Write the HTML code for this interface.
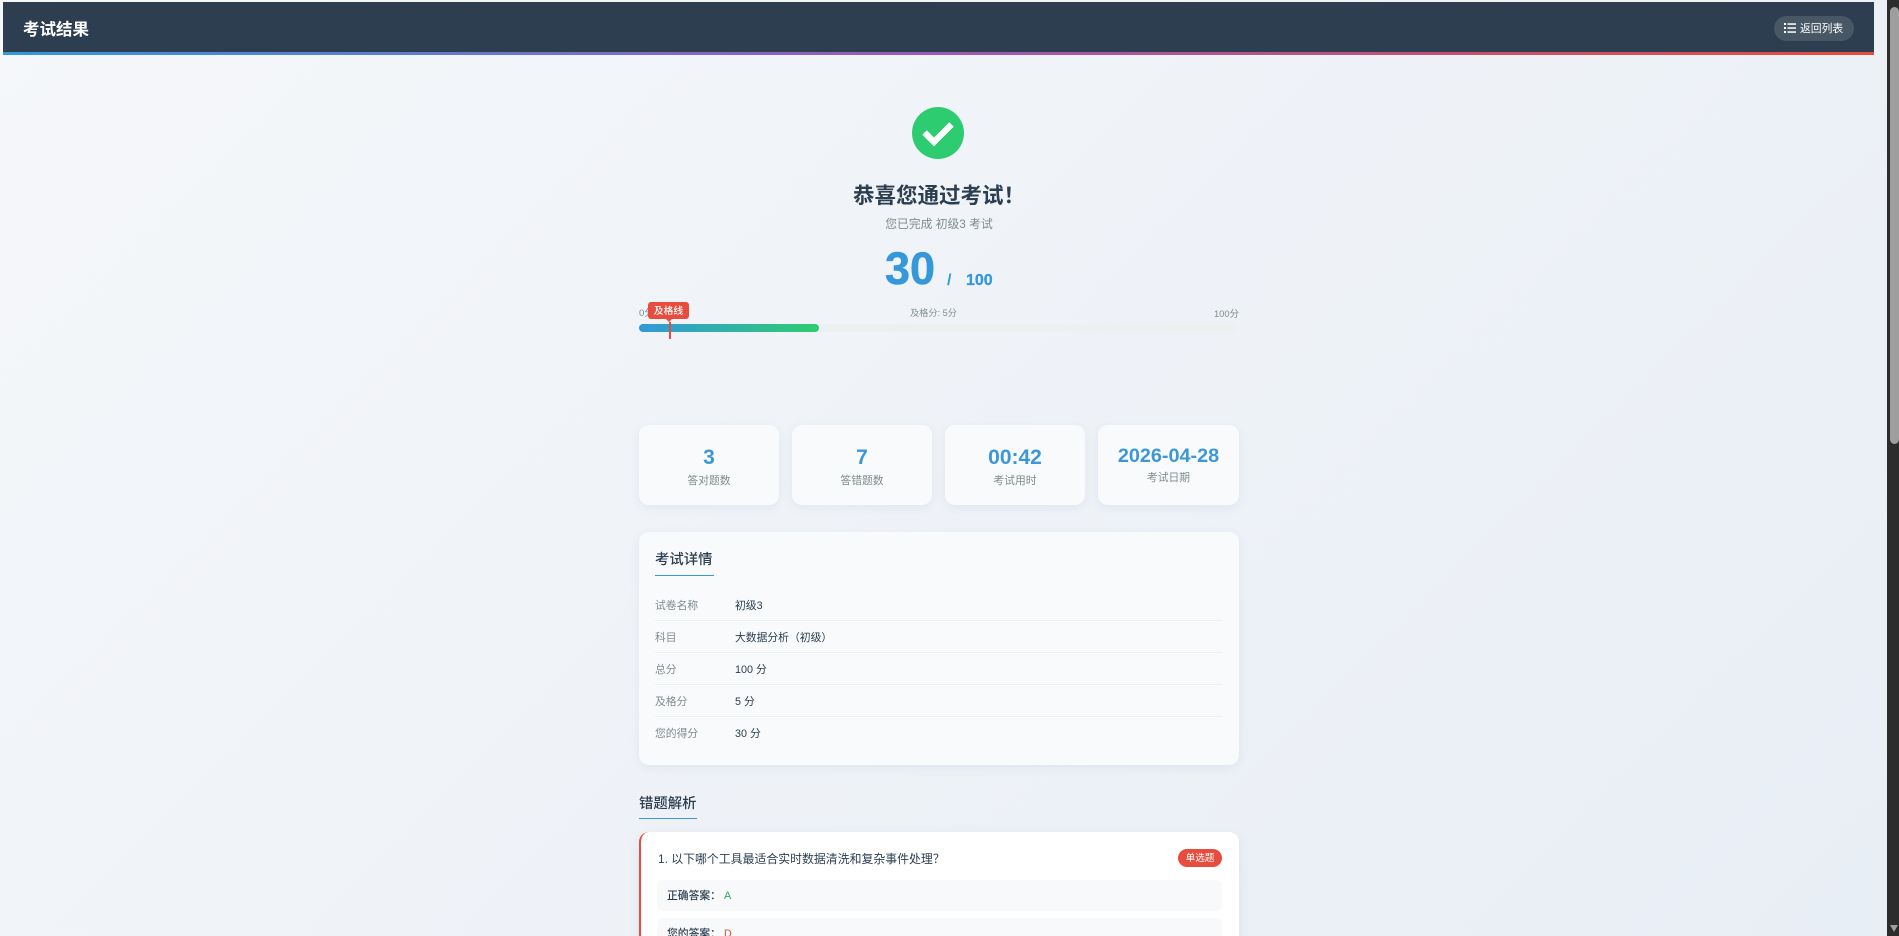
<!DOCTYPE html>
<html lang="zh-CN"><head><meta charset="utf-8"><title>考试结果</title>
<style>
*{box-sizing:border-box;margin:0;padding:0}
html,body{width:1899px;height:936px;overflow:hidden}
body{position:relative;font-family:"Liberation Sans","Noto Sans CJK SC",sans-serif;background:linear-gradient(135deg,#f5f7fa 0%,#e8eef5 100%);color:#2c3e50}
.a{position:absolute;white-space:nowrap}
.hdr{left:3px;top:2px;width:1871px;height:53px;background:#2c3e50}
.bar{left:3px;top:52px;width:1871px;height:3px;background:linear-gradient(90deg,#3498db,#9b59b6,#e74c3c)}
.ttl{left:23px;top:19px;font-size:16.500px;line-height:22px;font-weight:700;color:#fff}
.btn{left:1774px;top:16px;width:80px;height:25px;border-radius:13px;background:rgba(255,255,255,.13)}
.btnt{left:1800px;top:21px;font-size:10.800px;line-height:17px;color:#fff}
.c{text-align:center}
.card{background:#f8fafc;border-radius:10px;box-shadow:0 3px 10px rgba(60,80,110,.07)}
.sv{font-weight:700;color:#3d97d6;font-size:21px;line-height:26px;text-align:center}
.sl{font-size:10.800px;line-height:15px;color:#7f8c8d;text-align:center}
.lb{left:655px;font-size:10.800px;line-height:16px;color:#7f8c8d}
.v{left:735px;font-size:10.800px;line-height:16px;color:#2c3e50}
.ln{left:655px;width:567px;height:1px;background:#ecf0f1}
</style></head><body>
<div class="a hdr"></div><div class="a bar"></div>
<div class="a ttl">考试结果</div>
<div class="a btn"></div>
<svg class="a" style="left:1784px;top:23px" width="12" height="10" viewBox="0 0 12 10"><g fill="#fff"><rect x="0" y="0" width="2" height="2"/><rect x="0" y="4" width="2" height="2"/><rect x="0" y="8" width="2" height="2"/><rect x="3.500" y="0.300" width="8.500" height="1.500"/><rect x="3.500" y="4.300" width="8.500" height="1.500"/><rect x="3.500" y="8.300" width="8.500" height="1.500"/></g></svg>
<div class="a btnt">返回列表</div>

<svg class="a" style="left:912px;top:107px" width="52" height="52" viewBox="0 0 52 52"><circle cx="26" cy="26" r="26" fill="#2ecc71"/><path d="M12.500 25.500L22 35L39.500 17.500" fill="none" stroke="#fff" stroke-width="6.200"/></svg>
<div class="a c" style="left:639px;top:181px;width:600px;font-size:21.500px;line-height:30px;font-weight:700;color:#2c3e50">恭喜您通过考试！</div>
<div class="a c" style="left:639px;top:215px;width:600px;font-size:11.800px;line-height:18px;color:#7f8c8d">您已完成 初级3 考试</div>
<div class="a" style="left:885px;top:243px;font-size:45px;line-height:52px;font-weight:700;color:#3498db;-webkit-text-stroke:.5px #3498db">30</div>
<div class="a" style="left:947px;top:270px;font-size:16px;line-height:22px;font-weight:700;color:#3498db">/</div>
<div class="a" style="left:966px;top:270px;font-size:16px;line-height:22px;font-weight:700;color:#3498db;-webkit-text-stroke:.3px #3498db">100</div>

<div class="a" style="left:639px;top:306px;font-size:9.600px;line-height:15px;color:#7f8c8d">0分</div>
<div class="a" style="left:910px;top:306px;font-size:9.200px;line-height:15px;color:#7f8c8d">及格分: 5分</div>
<div class="a" style="right:660px;top:306px;font-size:9.400px;line-height:15px;color:#7f8c8d">100分</div>
<div class="a" style="left:639px;top:324px;width:600px;height:8px;border-radius:4px;background:#ecf0f1"></div>
<div class="a" style="left:639px;top:324px;width:180px;height:8px;border-radius:4px;background:linear-gradient(90deg,#3498db,#2ecc71)"></div>
<div class="a" style="left:669px;top:322px;width:2px;height:17px;background:#e74c3c"></div>
<div class="a" style="left:648px;top:302px;width:41px;height:17px;border-radius:3px;background:#e74c3c"></div>
<div class="a c" style="left:648px;top:304px;width:41px;height:15px;color:#fff;font-size:9.800px;line-height:15px;font-weight:500">及格线</div>
<div class="a" style="left:666px;top:319px;width:0;height:0;border-left:3px solid transparent;border-right:3px solid transparent;border-top:3px solid #e74c3c"></div>

<div class="a card" style="left:639px;top:425px;width:140px;height:80px"></div>
<div class="a sv" style="left:639px;top:445px;width:140px">3</div><div class="a sl" style="left:639px;top:474px;width:140px">答对题数</div>
<div class="a card" style="left:792px;top:425px;width:140px;height:80px"></div>
<div class="a sv" style="left:792px;top:445px;width:140px">7</div><div class="a sl" style="left:792px;top:474px;width:140px">答错题数</div>
<div class="a card" style="left:945px;top:425px;width:140px;height:80px"></div>
<div class="a sv" style="left:945px;top:445px;width:140px">00:42</div><div class="a sl" style="left:945px;top:474px;width:140px">考试用时</div>
<div class="a card" style="left:1098px;top:425px;width:141px;height:80px"></div>
<div class="a sv" style="left:1098px;top:443px;width:141px;font-size:19.800px">2026-04-28</div><div class="a sl" style="left:1098px;top:471px;width:141px">考试日期</div>

<div class="a card" style="left:639px;top:532px;width:600px;height:233px"></div>
<div class="a" style="left:655px;top:549px;font-size:14.400px;line-height:22px;font-weight:500;color:#2c3e50">考试详情</div>
<div class="a" style="left:655px;top:575px;width:59px;height:1px;background:#3498db"></div>
<div class="a lb" style="top:598px">试卷名称</div><div class="a v" style="top:598px">初级3</div><div class="a ln" style="top:620px"></div>
<div class="a lb" style="top:630px">科目</div><div class="a v" style="top:630px">大数据分析（初级）</div><div class="a ln" style="top:652px"></div>
<div class="a lb" style="top:662px">总分</div><div class="a v" style="top:662px">100 分</div><div class="a ln" style="top:684px"></div>
<div class="a lb" style="top:694px">及格分</div><div class="a v" style="top:694px">5 分</div><div class="a ln" style="top:716px"></div>
<div class="a lb" style="top:726px">您的得分</div><div class="a v" style="top:726px">30 分</div>

<div class="a" style="left:639px;top:793px;font-size:14.400px;line-height:22px;font-weight:500;color:#2c3e50">错题解析</div>
<div class="a" style="left:639px;top:818px;width:58px;height:1px;background:#3498db"></div>
<div class="a" style="left:639px;top:832px;width:600px;height:120px;background:#fff;border-left:2px solid #e74c3c;border-radius:10px;box-shadow:0 3px 12px rgba(60,80,110,.08)"></div>
<div class="a" style="left:658px;top:850px;font-size:11.900px;line-height:18px;color:#2c3e50">1. 以下哪个工具最适合实时数据清洗和复杂事件处理？</div>
<div class="a" style="left:1178px;top:849px;width:44px;height:18px;border-radius:9px;background:#e74c3c"></div>
<div class="a c" style="left:1178px;top:851px;width:44px;height:16px;color:#fff;font-size:9.600px;line-height:16px">单选题</div>
<div class="a" style="left:657px;top:880px;width:565px;height:31px;border-radius:6px;background:#f8f9fa"></div>
<div class="a" style="left:667px;top:888px;font-size:10.800px;line-height:17px;font-weight:500;color:#2c3e50">正确答案：</div>
<div class="a" style="left:724px;top:888px;font-size:10.800px;line-height:17px;color:#27ae60">A</div>
<div class="a" style="left:657px;top:918px;width:565px;height:31px;border-radius:6px;background:#f8f9fa"></div>
<div class="a" style="left:667px;top:926px;font-size:10.800px;line-height:17px;font-weight:500;color:#2c3e50">您的答案：</div>
<div class="a" style="left:724px;top:926px;font-size:10.800px;line-height:17px;color:#e74c3c">D</div>

<div class="a" style="left:1887px;top:0;width:12px;height:936px;background:#2c2c2c"></div>
<div class="a" style="left:1890px;top:7px;width:9px;height:437px;border-radius:5px;background:#9e9e9e"></div>
<div class="a" style="left:1890px;top:925px;width:0;height:0;border-left:4px solid transparent;border-right:4px solid transparent;border-top:7px solid #9e9e9e"></div>
</body></html>
